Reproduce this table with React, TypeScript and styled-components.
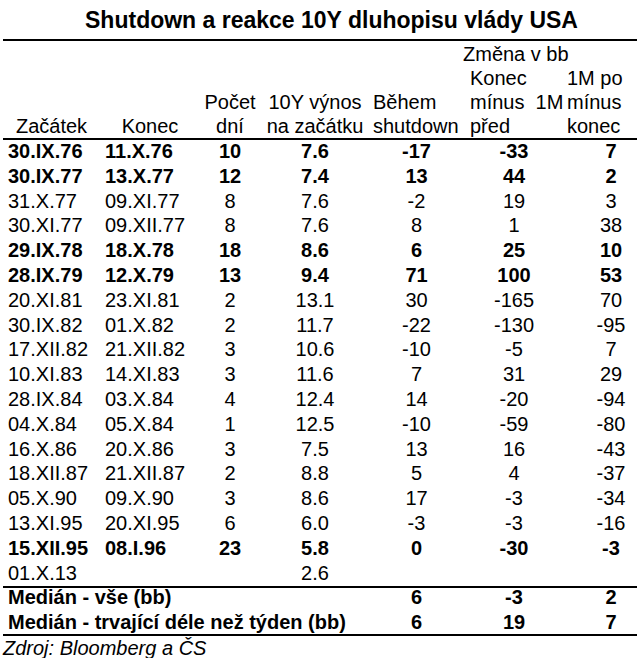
import styled, { createGlobalStyle } from "styled-components";

const GlobalStyle = createGlobalStyle`
    body {
        margin: 0;
        background: #ffffff;
        color: #000000;
        font-family: "Liberation Sans", Arial, sans-serif;
    }
`;

const COLUMNS = "97px 100px 60px 110px 93px 102px 72px";

const Page = styled.div`
    width: 634px;
    padding-left: 3px;
`;

const Title = styled.h1`
    margin: 0;
    padding: 5px 0 4px 23px;
    font-size: 23px;
    line-height: 30px;
    font-weight: bold;
    text-align: center;
    border-bottom: 2px solid #000;
`;

const Section = styled.div<{ $top?: number }>`
    padding-top: ${(p) => p.$top ?? 0}px;
    border-bottom: 2px solid #000;
    font-size: 20px;
`;

const Row = styled.div<{ $h: number; $bold?: boolean }>`
    display: grid;
    grid-template-columns: ${COLUMNS};
    height: ${(p) => p.$h}px;
    font-weight: ${(p) => (p.$bold ? "bold" : "normal")};
`;

const HeadCell = styled.div<{ $left?: number; $span?: number }>`
    grid-column: span ${(p) => p.$span ?? 1};
    padding-left: ${(p) => p.$left ?? 0}px;
    line-height: 24px;
    white-space: nowrap;
    text-align: ${(p) => (p.$left !== undefined ? "left" : "center")};
`;

const Cell = styled.div<{ $left?: boolean; $shift?: number; $span?: number; $lh?: number; $top?: number }>`
    grid-column: span ${(p) => p.$span ?? 1};
    padding-top: ${(p) => p.$top ?? 1}px;
    padding-left: ${(p) => (p.$left ? 5 : p.$shift ?? 0)}px;
    line-height: ${(p) => p.$lh ?? 20}px;
    white-space: nowrap;
    text-align: ${(p) => (p.$left ? "left" : "center")};
`;

const Source = styled.div`
    padding-top: 2px;
    font-size: 20px;
    line-height: 20px;
    font-style: italic;
`;

type Entry = {
    start: string;
    end: string;
    days: string;
    yld: string;
    during: string;
    before: string;
    after: string;
    bold?: boolean;
};

const rows: Entry[] = [
    { start: "30.IX.76", end: "11.X.76", days: "10", yld: "7.6", during: "-17", before: "-33", after: "7", bold: true },
    { start: "30.IX.77", end: "13.X.77", days: "12", yld: "7.4", during: "13", before: "44", after: "2", bold: true },
    { start: "31.X.77", end: "09.XI.77", days: "8", yld: "7.6", during: "-2", before: "19", after: "3" },
    { start: "30.XI.77", end: "09.XII.77", days: "8", yld: "7.6", during: "8", before: "1", after: "38" },
    { start: "29.IX.78", end: "18.X.78", days: "18", yld: "8.6", during: "6", before: "25", after: "10", bold: true },
    { start: "28.IX.79", end: "12.X.79", days: "13", yld: "9.4", during: "71", before: "100", after: "53", bold: true },
    { start: "20.XI.81", end: "23.XI.81", days: "2", yld: "13.1", during: "30", before: "-165", after: "70" },
    { start: "30.IX.82", end: "01.X.82", days: "2", yld: "11.7", during: "-22", before: "-130", after: "-95" },
    { start: "17.XII.82", end: "21.XII.82", days: "3", yld: "10.6", during: "-10", before: "-5", after: "7" },
    { start: "10.XI.83", end: "14.XI.83", days: "3", yld: "11.6", during: "7", before: "31", after: "29" },
    { start: "28.IX.84", end: "03.X.84", days: "4", yld: "12.4", during: "14", before: "-20", after: "-94" },
    { start: "04.X.84", end: "05.X.84", days: "1", yld: "12.5", during: "-10", before: "-59", after: "-80" },
    { start: "16.X.86", end: "20.X.86", days: "3", yld: "7.5", during: "13", before: "16", after: "-43" },
    { start: "18.XII.87", end: "21.XII.87", days: "2", yld: "8.8", during: "5", before: "4", after: "-37" },
    { start: "05.X.90", end: "09.X.90", days: "3", yld: "8.6", during: "17", before: "-3", after: "-34" },
    { start: "13.XI.95", end: "20.XI.95", days: "6", yld: "6.0", during: "-3", before: "-3", after: "-16" },
    { start: "15.XII.95", end: "08.I.96", days: "23", yld: "5.8", during: "0", before: "-30", after: "-3", bold: true },
    { start: "01.X.13", end: "", days: "", yld: "2.6", during: "", before: "", after: "" },
];

const medians = [
    { label: "Medián - vše (bb)", during: "6", before: "-3", after: "2", h: 24.5 },
    { label: "Medián - trvající déle než týden (bb)", during: "6", before: "19", after: "7", h: 21.5 },
];

export default function App() {
    return (
        <Page>
            <GlobalStyle />
            <Title>Shutdown a reakce 10Y dluhopisu vlády USA</Title>

            <Section $top={1}>
                <Row $h={24}>
                    <HeadCell $span={5} />
                    <HeadCell $span={2} $left={0}>Změna v bb</HeadCell>
                </Row>
                <Row $h={24}>
                    <HeadCell $span={5} />
                    <HeadCell $left={7}>Konec</HeadCell>
                    <HeadCell $left={2}>1M po</HeadCell>
                </Row>
                <Row $h={24}>
                    <HeadCell $span={2} />
                    <HeadCell>Počet</HeadCell>
                    <HeadCell>10Y výnos</HeadCell>
                    <HeadCell $left={3}>Během</HeadCell>
                    <HeadCell $left={7}>mínus&nbsp;&nbsp;1M</HeadCell>
                    <HeadCell $left={2}>mínus</HeadCell>
                </Row>
                <Row $h={24}>
                    <HeadCell>Začátek</HeadCell>
                    <HeadCell>Konec</HeadCell>
                    <HeadCell>dní</HeadCell>
                    <HeadCell>na začátku</HeadCell>
                    <HeadCell $left={3}>shutdown</HeadCell>
                    <HeadCell $left={7}>před</HeadCell>
                    <HeadCell $left={2}>konec</HeadCell>
                </Row>
            </Section>

            <Section>
                {rows.map((r) => (
                    <Row key={r.start} $h={24.8} $bold={r.bold}>
                        <Cell $left>{r.start}</Cell>
                        <Cell $left>{r.end}</Cell>
                        <Cell>{r.days}</Cell>
                        <Cell>{r.yld}</Cell>
                        <Cell>{r.during}</Cell>
                        <Cell>{r.before}</Cell>
                        <Cell $shift={20}>{r.after}</Cell>
                    </Row>
                ))}
            </Section>

            <Section>
                {medians.map((m) => (
                    <Row key={m.label} $h={m.h} $bold>
                        <Cell $left $span={4} $lh={16} $top={0.7}>{m.label}</Cell>
                        <Cell $lh={16} $top={0.7}>{m.during}</Cell>
                        <Cell $lh={16} $top={0.7}>{m.before}</Cell>
                        <Cell $lh={16} $top={0.7} $shift={20}>{m.after}</Cell>
                    </Row>
                ))}
            </Section>

            <Source>Zdroj: Bloomberg a ČS</Source>
        </Page>
    );
}
